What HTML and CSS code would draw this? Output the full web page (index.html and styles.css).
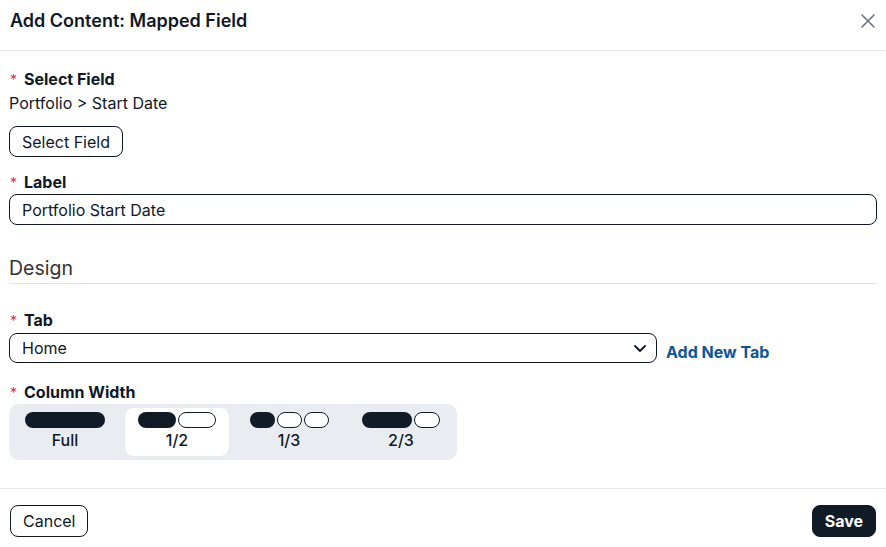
FILE: index.html
```html
<!DOCTYPE html>
<html lang="en">
<head>
<meta charset="utf-8">
<title>Add Content: Mapped Field</title>
<link rel="stylesheet" href="styles.css">
</head>
<body>
<div class="modal">
  <header class="modal-header">
    <h1 class="modal-title">Add Content: Mapped Field</h1>
    <button class="close-btn" aria-label="Close">
      <svg width="14" height="14" viewBox="0 0 14 14"><path d="M1 1L13 13M13 1L1 13" stroke="#6b7280" stroke-width="1.6" stroke-linecap="round"/></svg>
    </button>
  </header>
  <main class="modal-body">
    <div class="field-label first"><span class="req">*</span>Select Field</div>
    <div class="field-value">Portfolio &gt; Start Date</div>
    <button class="btn btn-outline select-btn">Select Field</button>

    <div class="field-label label-gap"><span class="req">*</span>Label</div>
    <div class="text-input">Portfolio Start Date</div>

    <h2 class="section-title">Design</h2>

    <div class="field-label tab-gap"><span class="req">*</span>Tab</div>
    <div class="select-row">
      <div class="select-box">
        <span>Home</span>
        <svg class="chevron" width="12" height="7" viewBox="0 0 12 7"><path d="M1 1L6 6L11 1" fill="none" stroke="#101828" stroke-width="1.8" stroke-linecap="round" stroke-linejoin="round"/></svg>
      </div>
      <a class="link" href="#">Add New Tab</a>
    </div>

    <div class="field-label cw-gap"><span class="req">*</span>Column Width</div>
    <div class="segmented">
      <div class="seg-item">
        <div class="pills"><span class="pill fill w80"></span></div>
        <div class="seg-label">Full</div>
      </div>
      <div class="seg-item active">
        <div class="pills"><span class="pill fill w38"></span><span class="pill outline w38"></span></div>
        <div class="seg-label">1/2</div>
      </div>
      <div class="seg-item">
        <div class="pills"><span class="pill fill w25"></span><span class="pill outline w25"></span><span class="pill outline w25"></span></div>
        <div class="seg-label">1/3</div>
      </div>
      <div class="seg-item">
        <div class="pills"><span class="pill fill w50"></span><span class="pill outline w26"></span></div>
        <div class="seg-label">2/3</div>
      </div>
    </div>
  </main>
  <footer class="modal-footer">
    <button class="btn btn-outline">Cancel</button>
    <button class="btn btn-primary">Save</button>
  </footer>
</div>
</body>
</html>
```
FILE: styles.css
```css
* { box-sizing: border-box; }
html, body { margin: 0; padding: 0; background: #fff; }
body {
  font-family: Inter, "Noto Sans", "Liberation Sans", sans-serif;
  color: #101828;
  font-size: 16px;
  line-height: 20px;
}
.modal { width: 886px; height: 547px; display: flex; flex-direction: column; }
.modal-header {
  height: 51px;
  border-bottom: 1px solid #e2e4e8;
  display: flex;
  align-items: center;
  justify-content: space-between;
  padding: 0 10px 9px 10px;
}
.modal-title { margin: 0; font-size: 18px; font-weight: 600; line-height: 24px; color: #101828; }
.close-btn {
  border: 0; background: none; padding: 0; width: 14px; height: 14px;
  display: flex; margin-right: 1px; cursor: pointer;
}
.modal-body { padding: 18px 9px 28px 9px; border-bottom: 1px solid #e2e4e8; }
.field-label { font-weight: 700; height: 20px; line-height: 20px; padding-left: 1px; overflow: visible; }
.req { color: #d62d5a; font-weight: 400; margin-right: 7px; font-size: 14px; line-height: 1; }
.field-value { margin-top: 4px; height: 20px; }
.btn {
  font-family: inherit; font-size: 16px; line-height: 20px; border-radius: 8px;
  height: 32px; padding: 0 12px; cursor: pointer; color: #101828;
}
.btn-outline { background: #fff; border: 1px solid #101828; }
.select-btn { margin-top: 13px; height: 31px; display: block; }
.label-gap { margin-top: 15px; }
.text-input {
  margin-top: 2px; height: 31px; border: 1px solid #101828; border-radius: 8px;
  padding: 0 12px; display: flex; align-items: center;
}
.section-title {
  margin: 31px 0 0 0; font-size: 19.5px; font-weight: 400; line-height: 24px; height: 28px; color: #333;
  padding-bottom: 3px; border-bottom: 1px solid #e2e4e8;
}
.tab-gap { margin-top: 26px; }
.select-row { margin-top: 3px; display: flex; align-items: flex-end; gap: 9px; height: 30px; }
.select-box {
  width: 648px; height: 30px; border: 1px solid #101828; border-radius: 8px;
  padding: 0 10px 0 12px; display: flex; align-items: center; justify-content: space-between;
}
.chevron { margin-top: 1px; }
.link { color: #0d5697; font-weight: 700; text-decoration: none; line-height: 20px; margin-bottom: 1px; }
.cw-gap { margin-top: 19px; }
.segmented {
  margin-top: 2px; width: 448px; height: 56px; background: #e9ecf0; border-radius: 10px;
  padding: 4px; display: grid; grid-template-columns: repeat(4, 104px); gap: 8px;
}
.seg-item {
  border-radius: 8px; display: flex; flex-direction: column; align-items: center;
  padding-top: 4px;
}
.seg-item.active { background: #fff; box-shadow: 0 0 1px rgba(16,24,40,0.15); }
.pills { display: flex; gap: 2px; height: 16px; }
.pill { height: 16px; border-radius: 8px; display: block; }
.pill.fill { background: #111b27; }
.pill.outline { background: #fff; border: 1px solid #111b27; }
.w80 { width: 80px; } .w38 { width: 38px; } .w25 { width: 25px; } .w50 { width: 50px; } .w26 { width: 26px; }
.seg-label { margin-top: 2px; font-weight: 500; line-height: 20px; }
.modal-footer {
  padding: 16px 10px 0 10px; display: flex; justify-content: space-between; align-items: flex-start;
}
.modal-footer .btn { height: 32px; }
.btn-primary { background: #111b27; color: #fff; border: 1px solid #111b27; font-weight: 700; padding: 0 12px; }
```
